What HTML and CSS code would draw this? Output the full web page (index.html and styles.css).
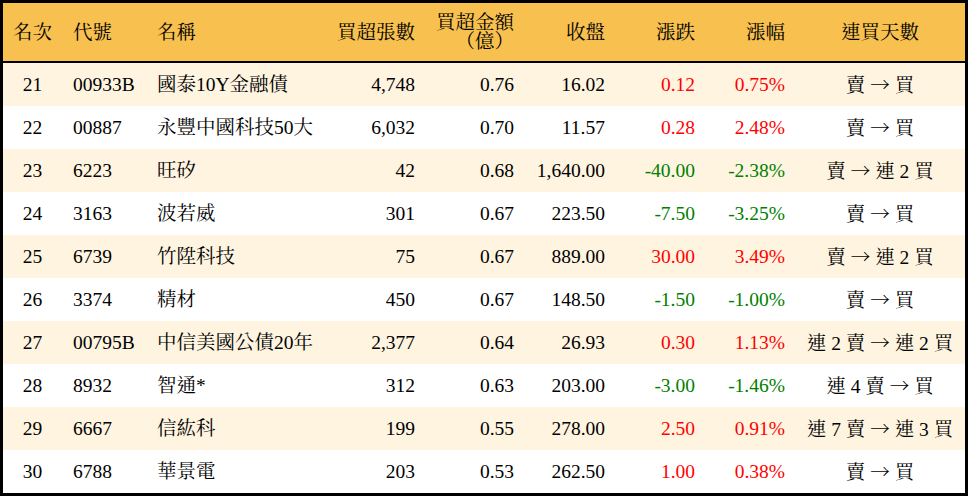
FILE: index.html
```html
<!DOCTYPE html>
<html lang="zh-Hant">
<head>
<meta charset="utf-8">
<title>買超排行</title>
<link rel="stylesheet" href="styles.css">
</head>
<body>
<div class="board">
<table class="rank">
<colgroup>
<col class="c-rank"><col class="c-code"><col class="c-name"><col class="c-vol"><col class="c-amt"><col class="c-close"><col class="c-chg"><col class="c-pct"><col class="c-days">
</colgroup>
<thead>
<tr>
<th class="ctr">名次</th>
<th class="lft">代號</th>
<th class="lft">名稱</th>
<th class="rgt">買超張數</th>
<th class="rgt">買超金額<br>（億）</th>
<th class="rgt">收盤</th>
<th class="rgt">漲跌</th>
<th class="rgt pct">漲幅</th>
<th class="ctr">連買天數</th>
</tr>
</thead>
<tbody>
<tr class="alt"><td class="ctr">21</td><td class="lft">00933B</td><td class="lft">國泰10Y金融債</td><td class="rgt">4,748</td><td class="rgt">0.76</td><td class="rgt">16.02</td><td class="rgt up">0.12</td><td class="rgt pct up">0.75%</td><td class="ctr">賣 <span class="arr">→</span> 買</td></tr>
<tr><td class="ctr">22</td><td class="lft">00887</td><td class="lft">永豐中國科技50大</td><td class="rgt">6,032</td><td class="rgt">0.70</td><td class="rgt">11.57</td><td class="rgt up">0.28</td><td class="rgt pct up">2.48%</td><td class="ctr">賣 <span class="arr">→</span> 買</td></tr>
<tr class="alt"><td class="ctr">23</td><td class="lft">6223</td><td class="lft">旺矽</td><td class="rgt">42</td><td class="rgt">0.68</td><td class="rgt">1,640.00</td><td class="rgt down">-40.00</td><td class="rgt pct down">-2.38%</td><td class="ctr">賣 <span class="arr">→</span> 連 2 買</td></tr>
<tr><td class="ctr">24</td><td class="lft">3163</td><td class="lft">波若威</td><td class="rgt">301</td><td class="rgt">0.67</td><td class="rgt">223.50</td><td class="rgt down">-7.50</td><td class="rgt pct down">-3.25%</td><td class="ctr">賣 <span class="arr">→</span> 買</td></tr>
<tr class="alt"><td class="ctr">25</td><td class="lft">6739</td><td class="lft">竹陞科技</td><td class="rgt">75</td><td class="rgt">0.67</td><td class="rgt">889.00</td><td class="rgt up">30.00</td><td class="rgt pct up">3.49%</td><td class="ctr">賣 <span class="arr">→</span> 連 2 買</td></tr>
<tr><td class="ctr">26</td><td class="lft">3374</td><td class="lft">精材</td><td class="rgt">450</td><td class="rgt">0.67</td><td class="rgt">148.50</td><td class="rgt down">-1.50</td><td class="rgt pct down">-1.00%</td><td class="ctr">賣 <span class="arr">→</span> 買</td></tr>
<tr class="alt"><td class="ctr">27</td><td class="lft">00795B</td><td class="lft">中信美國公債20年</td><td class="rgt">2,377</td><td class="rgt">0.64</td><td class="rgt">26.93</td><td class="rgt up">0.30</td><td class="rgt pct up">1.13%</td><td class="ctr">連 2 賣 <span class="arr">→</span> 連 2 買</td></tr>
<tr><td class="ctr">28</td><td class="lft">8932</td><td class="lft">智通*</td><td class="rgt">312</td><td class="rgt">0.63</td><td class="rgt">203.00</td><td class="rgt down">-3.00</td><td class="rgt pct down">-1.46%</td><td class="ctr">連 4 賣 <span class="arr">→</span> 買</td></tr>
<tr class="alt"><td class="ctr">29</td><td class="lft">6667</td><td class="lft">信紘科</td><td class="rgt">199</td><td class="rgt">0.55</td><td class="rgt">278.00</td><td class="rgt up">2.50</td><td class="rgt pct up">0.91%</td><td class="ctr">連 7 賣 <span class="arr">→</span> 連 3 買</td></tr>
<tr><td class="ctr">30</td><td class="lft">6788</td><td class="lft">華景電</td><td class="rgt">203</td><td class="rgt">0.53</td><td class="rgt">262.50</td><td class="rgt up">1.00</td><td class="rgt pct up">0.38%</td><td class="ctr">賣 <span class="arr">→</span> 買</td></tr>
</tbody>
</table>
</div>
</body>
</html>
```

FILE: styles.css
```css
html, body {
  margin: 0;
  padding: 0;
  background: #ffffff;
}

.board {
  width: 968px;
  height: 496px;
  box-sizing: border-box;
  border: 3px solid #000000;
  background: #ffffff;
  overflow: hidden;
}

.rank {
  width: 962px;
  border-collapse: separate;
  border-spacing: 0;
  table-layout: fixed;
  font-family: "Liberation Serif", "Noto Serif CJK TC", "Noto Sans CJK TC", serif;
  font-size: 19.5px;
  color: #000000;
}

.c-rank { width: 59px; }
.c-code { width: 84px; }
.c-name { width: 184px; }
.c-vol { width: 85px; }
.c-amt { width: 99px; }
.c-close { width: 91px; }
.c-chg { width: 90px; }
.c-pct { width: 100px; }
.c-days { width: 170px; }

.rank thead tr {
  height: 60px;
}

.rank th {
  background: #f8c14f;
  font-weight: normal;
  border-bottom: 2px solid #000000;
  padding: 0;
  line-height: 19px;
  vertical-align: middle;
  white-space: nowrap;
}

.rank tbody tr {
  height: 43px;
}

.rank td {
  padding: 0;
  vertical-align: middle;
  white-space: nowrap;
  line-height: 22px;
}

.rank tbody tr.alt td {
  background: #fef4e0;
}

.ctr { text-align: center; }
.lft { text-align: left; padding-left: 11px !important; }
.rgt { text-align: right; }
.pct { padding-right: 10px !important; }

.arr {
  font-family: "Noto Serif CJK TC", "Noto Sans CJK TC", sans-serif;
}

.up { color: #ff0000; }
.down { color: #008000; }
```
